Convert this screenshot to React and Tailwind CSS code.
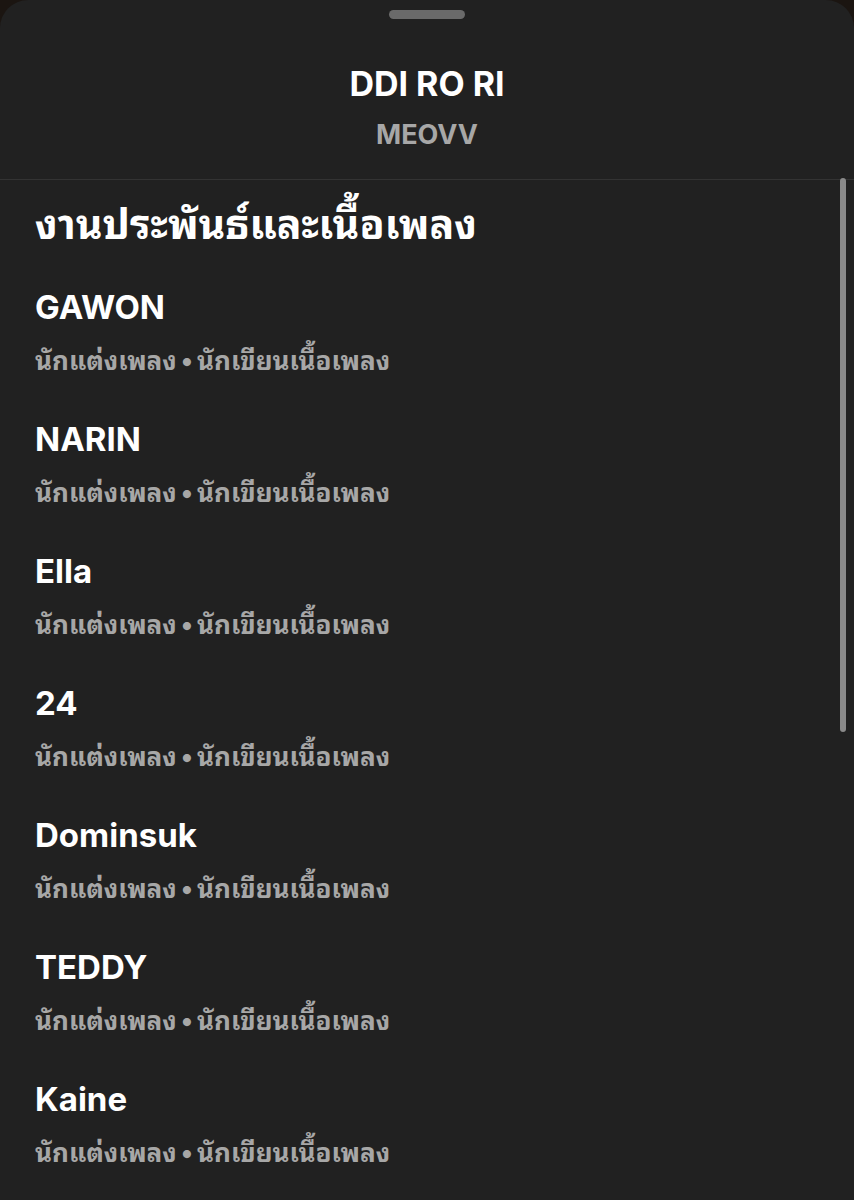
const credits = [
  { name: 'GAWON' },
  { name: 'NARIN' },
  { name: 'Ella' },
  { name: '24' },
  { name: 'Dominsuk' },
  { name: 'TEDDY' },
  { name: 'Kaine' },
]

const font = { fontFamily: 'Inter, "Noto Sans Thai Looped", "Noto Sans Thai", "Noto Sans", "DejaVu Sans", sans-serif' }

function CreditRow({ name }) {
  return (
    <div className="flex flex-col">
      <div className="text-[33px] leading-[40px] font-bold text-white">{name}</div>
      <div className="mt-[17px] text-[26px] leading-[34px] font-bold text-[#a7a7a7]">
        นักแต่งเพลง<span className="mx-[4px]">•</span>นักเขียนเนื้อเพลง
      </div>
    </div>
  )
}

export default function App() {
  return (
    <div className="w-[854px] h-[1200px] bg-[#1b1511] overflow-hidden" style={font}>
      <div className="relative h-full rounded-t-[28px] bg-[#212121] flex flex-col">
        <div className="h-[180px] border-b border-[#333333] flex flex-col items-center">
          <div className="mt-[10px] w-[76px] h-[9px] rounded-full bg-[#6a6a6a]" />
          <div className="mt-[45px] text-[34px] leading-[40px] font-bold text-white">DDI RO RI</div>
          <div className="mt-[14px] text-[27px] leading-[34px] font-bold text-[#a7a7a7]">MEOVV</div>
        </div>
        <div className="flex-1 pl-[35px] pt-[20px] flex flex-col">
          <div className="text-[41px] leading-[48px] font-bold text-white">งานประพันธ์และเนื้อเพลง</div>
          <div className="mt-[39px] flex flex-col gap-[41px]">
            {credits.map((c) => (
              <CreditRow key={c.name} name={c.name} />
            ))}
          </div>
        </div>
        <div className="absolute right-[8px] top-[178px] w-[6px] h-[554px] rounded-full bg-[#8a8a8a]" />
      </div>
    </div>
  )
}
